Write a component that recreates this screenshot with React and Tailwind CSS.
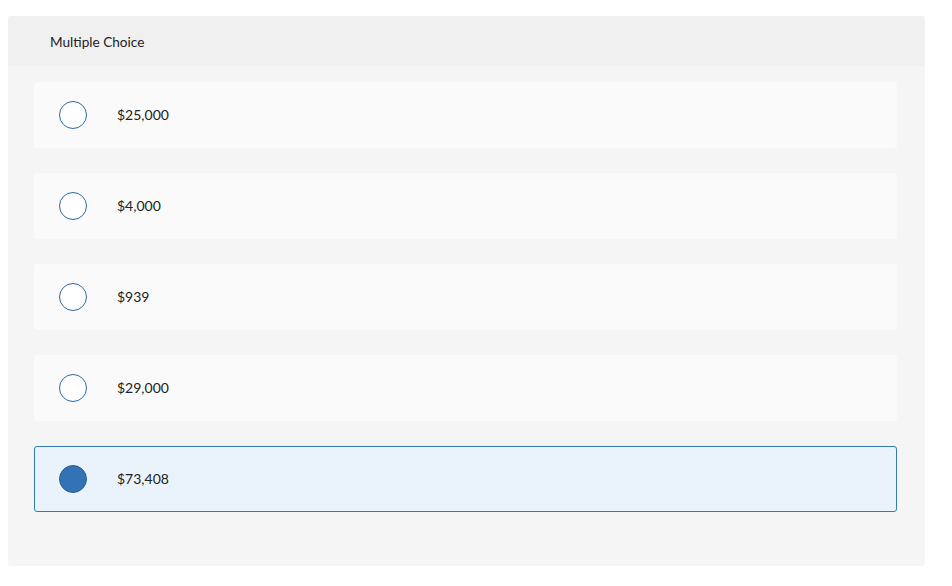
export default function App() {
  const options = ["$25,000", "$4,000", "$939", "$29,000", "$73,408"];
  const selected = 4;
  return (
    <div className="w-[952px] h-[586px] bg-white pt-4 pl-2" style={{ fontFamily: "Lato, 'Open Sans', sans-serif" }}>
      <div className="w-[917px] h-[550px] bg-[#f5f5f5] rounded-[3px] overflow-hidden">
        <div className="h-[50px] bg-[#f0f0f0] flex items-center pl-[42px] pt-[2px] text-[13.6px] text-[#222]">
          Multiple Choice
        </div>
        <div className="flex flex-col gap-[25px] pt-4 pl-[26px] pr-[28px]">
          {options.map((o, i) =>
            i === selected ? (
              <div key={i} className="h-[66px] rounded-[3px] border border-[#337ab7] bg-[#eaf3fb] flex items-center pl-[24px]">
                <div className="w-[28px] h-[28px] rounded-full bg-[#3173b4] border border-[#2a5f94]" />
                <span className="ml-[30px] mb-[2px] text-[14px] text-[#222]">{o}</span>
              </div>
            ) : (
              <div key={i} className="h-[66px] rounded-[3px] bg-[#fafafa] flex items-center pl-[25px]">
                <div className="w-[28px] h-[28px] rounded-full bg-white border border-[#2a6aa6]" />
                <span className="ml-[30px] mb-[2px] text-[14px] text-[#222]">{o}</span>
              </div>
            )
          )}
        </div>
      </div>
    </div>
  );
}
